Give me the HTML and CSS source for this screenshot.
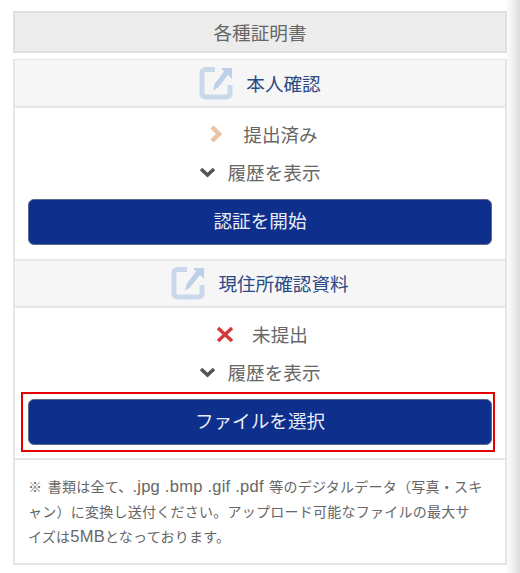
FILE: index.html
```html
<!DOCTYPE html>
<html lang="ja">
<head>
    <meta charset="UTF-8">
    <meta name="viewport" content="width=device-width, initial-scale=1.0">
    <title>各種証明書</title>
    <link rel="stylesheet" href="styles.css">
</head>
<body>
    <h1 class="page-title">各種証明書</h1>
    <div class="panel">
        <h2 class="doc-head">
            <svg class="doc-icon" viewBox="0 0 34 34"><path d="M16 3.500H6.500A3.500 3.500 0 0 0 3 7V27.500A3.500 3.500 0 0 0 6.500 31H27.500A3.500 3.500 0 0 0 31 27.500V19" fill="none" stroke="#c9d8ea" stroke-width="5"/><path d="M22 2H33V13L29 9L19 21.500L14 24.500L15.500 18L25 5.500Z" fill="#bdd0e8"/></svg>
            <span>本人確認</span>
        </h2>
        <div class="doc-body">
            <p class="status-row status-done">
                <svg class="status-icon" width="12" height="18" viewBox="0 0 12 18"><path d="M2 2L9 9L2 16" fill="none" stroke="#e9c3a4" stroke-width="4.500"/></svg>
                <span>提出済み</span>
            </p>
            <p class="status-row history-row">
                <svg class="status-icon" width="17" height="11" viewBox="0 0 17 11"><path d="M2 2L8.500 8L15 2" fill="none" stroke="#555" stroke-width="3.500"/></svg>
                <span>履歴を表示</span>
            </p>
            <button class="action-btn" type="button">認証を開始</button>
        </div>
        <h2 class="doc-head">
            <svg class="doc-icon" viewBox="0 0 34 34"><path d="M16 3.500H6.500A3.500 3.500 0 0 0 3 7V27.500A3.500 3.500 0 0 0 6.500 31H27.500A3.500 3.500 0 0 0 31 27.500V19" fill="none" stroke="#c9d8ea" stroke-width="5"/><path d="M22 2H33V13L29 9L19 21.500L14 24.500L15.500 18L25 5.500Z" fill="#bdd0e8"/></svg>
            <span>現住所確認資料</span>
        </h2>
        <div class="doc-body doc-body-last">
            <p class="status-row status-none">
                <svg class="status-icon" width="18" height="17" viewBox="0 0 18 17"><path d="M2 2L16 15M16 2L2 15" fill="none" stroke="#d4393a" stroke-width="3.500"/></svg>
                <span>未提出</span>
            </p>
            <p class="status-row history-row">
                <svg class="status-icon" width="17" height="11" viewBox="0 0 17 11"><path d="M2 2L8.500 8L15 2" fill="none" stroke="#555" stroke-width="3.500"/></svg>
                <span>履歴を表示</span>
            </p>
            <div class="highlight">
                <button class="action-btn" type="button">ファイルを選択</button>
            </div>
        </div>
        <p class="note">※ 書類は全て、<span class="latin">.jpg .bmp .gif .pdf</span> 等のデジタルデータ（写真・スキ<br>ャン）に変換し送付ください。アップロード可能なファイルの最大サ<br>イズは<span class="latin">5MB</span>となっております。</p>
    </div>
</body>
</html>
```

FILE: styles.css
```css
html {
    background: linear-gradient(270deg, #dcdcdc, #f4f4f4 9px, #fff 15px);
    height: 100%;
}
body {
    margin: 0;
    padding: 11px 13px 0;
    color: #666;
    font-family: "Noto Sans CJK JP", "Liberation Sans", sans-serif;
    font-size: 18.600px;
    line-height: 26px;
}
.page-title {
    margin: 0 0 6px;
    height: 42px;
    box-sizing: border-box;
    border: 2px solid #e0e0e0;
    background: #ececec;
    color: #666;
    font-size: inherit;
    font-weight: 400;
    line-height: 37px;
    text-align: center;
}
.panel {
    border: 2px solid #e6e6e6;
    border-width: 1px 2px 2px;
    background: #fff;
}
.doc-head {
    display: flex;
    justify-content: center;
    align-items: center;
    gap: 13px;
    margin: 0;
    height: 48px;
    box-sizing: border-box;
    border-bottom: 2px solid #e6e6e6;
    background: #f6f6f6;
    color: #2c4a86;
    font-size: inherit;
    font-weight: 400;
}
.doc-body + .doc-head {
    height: 49px;
    padding-bottom: 2px;
    border-top: 2px solid #e6e6e6;
}
.doc-icon {
    width: 34px;
    height: 34px;
}
.doc-body {
    padding: 13px 13px 14px;
}
.doc-body-last {
    padding-bottom: 13px;
}
.status-row {
    display: flex;
    justify-content: center;
    align-items: center;
    margin: 0 0 12px;
}
.status-done {
    gap: 21px;
    padding-left: 8px;
}
.history-row {
    gap: 12px;
    padding-right: 1px;
}
.status-none {
    gap: 18px;
    padding-left: 4px;
}
.action-btn {
    display: block;
    width: 100%;
    height: 46px;
    margin-top: 14px;
    padding: 0 0 5px;
    border: 1px solid #5a6a8c;
    border-radius: 6px;
    background: #0e2f8c;
    color: #e8ecf4;
    font-family: inherit;
    font-size: inherit;
}
.highlight {
    position: relative;
    margin-top: 14px;
}
.highlight .action-btn {
    margin-top: 0;
}
.highlight::after {
    content: "";
    position: absolute;
    inset: -7px -3px -7px -7px;
    border: 2px solid #e60000;
}
.note {
    margin: 0;
    padding: 14px 0 14px 13px;
    border-top: 2px solid #e6e6e6;
    font-size: 14px;
    line-height: 25px;
    letter-spacing: 0.250px;
    word-spacing: 2px;
    white-space: nowrap;
}
.latin {
    font-family: "Liberation Sans", sans-serif;
    font-size: 16.500px;
    word-spacing: 0;
}
```
